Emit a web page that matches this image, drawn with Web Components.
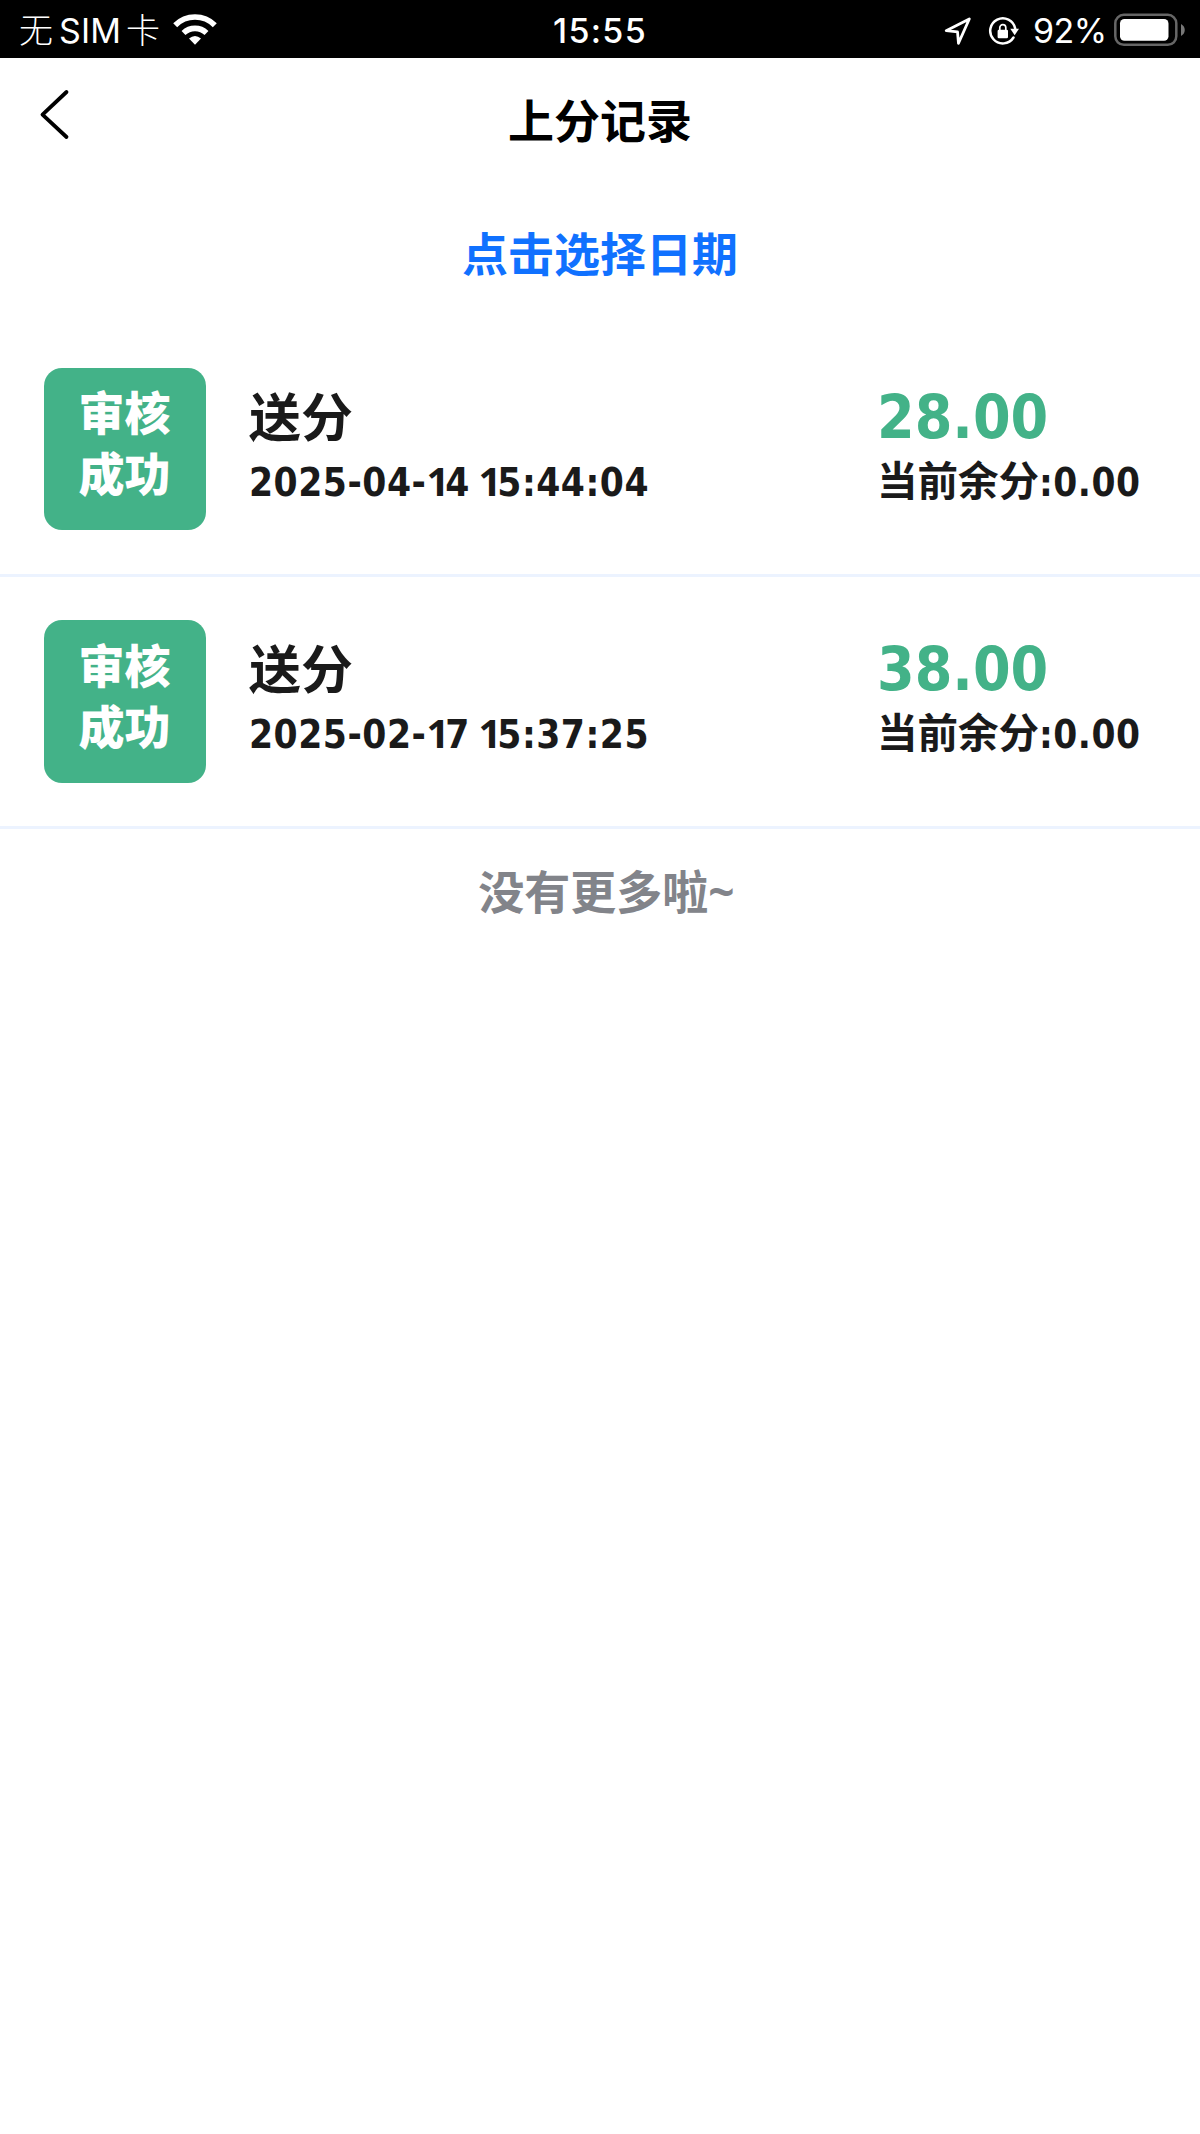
<!DOCTYPE html>
<html lang="zh-CN">
<head>
<meta charset="utf-8">
<title>上分记录</title>
<style>
html,body{margin:0;background:#fff}
body{width:1200px;height:2134px;overflow:hidden;font-family:"Noto Sans","Noto Sans CJK SC",sans-serif}
</style>
</head>
<body>
<records-page></records-page>
<script>
function define(name, html) {
  const t = document.createElement('template');
  t.innerHTML = html;
  customElements.define(name, class extends HTMLElement {
    constructor() {
      super();
      this.attachShadow({mode: 'open'}).append(t.content.cloneNode(true));
    }
  });
}

define('status-bar', `
<style>
:host{display:grid;grid-template-columns:1fr auto 1fr;align-items:center;height:58px;background:#000;color:#fff;font-family:Inter,"Noto Sans CJK SC",sans-serif;line-height:58px;white-space:nowrap}
.l,.r{display:flex;align-items:center;height:58px}
.l{padding-left:19px}
.r{justify-content:flex-end;padding-right:14px}
.carrier{font-size:33px;font-weight:300;width:141px;padding-top:1px}
.cjk{font-weight:300;font-size:34px}
.sim{font-size:34px;font-weight:400;letter-spacing:.1px;margin:0 5px 0 6px}
.time{font-size:34px;font-weight:500;letter-spacing:1.3px;padding-top:2px}
.pct{font-size:34px;letter-spacing:-.5px;width:76px;margin:2px 5px 0 13px}
svg{display:block;flex:none}
</style>
<div class="l"><span class="carrier"><span class="cjk">无</span><span class="sim">SIM</span><span class="cjk">卡</span></span>
<svg style="margin-left:12px;margin-bottom:2px" width="46" height="34" viewBox="0 0 46 34"><g fill="none" stroke="#fff" stroke-width="5.6"><path d="M3.2 13.2A28 28 0 0 1 42.8 13.2"/><path d="M11.5 21A16.5 16.5 0 0 1 34.500 21"/></g><path d="M17 26.500Q23 21.500 29 26.500L23 32.700Z" fill="#fff"/></svg></div>
<div class="time">15:55</div>
<div class="r">
<svg style="margin-top:1px" width="28" height="30" viewBox="0 0 28 30"><path d="M2.200 14.700L25.300 3 14.500 27.300 13.500 15.800Z" fill="none" stroke="#fff" stroke-width="2.800" stroke-linejoin="round"/></svg>
<svg style="margin:2px 0 0 16px" width="32" height="30" viewBox="0 0 32 30"><path d="M25.500 21.500A12.600 12.600 0 1 1 27.200 12.500" fill="none" stroke="#fff" stroke-width="2.500" stroke-linecap="round"/><path d="M22.300 12.800H31L26.700 19.300Z" fill="#fff"/><rect x="9.600" y="13.700" width="10.400" height="8.600" rx="1.300" fill="#fff"/><path d="M11.800 14.500V11.600a3 3 0 0 1 6 0V14.500" fill="none" stroke="#fff" stroke-width="1.700"/></svg>
<span class="pct">92%</span>
<svg style="margin-bottom:1px" width="72" height="34" viewBox="0 0 72 34"><rect x="1.300" y="1.800" width="61" height="30" rx="8.500" fill="none" stroke="#666" stroke-width="2.500"/><rect x="6" y="6" width="48.500" height="21.800" rx="4.500" fill="#fff"/><path d="M67 11C72 13.500 72 20.500 67 23Z" fill="#777"/></svg>
</div>`);

define('nav-bar', `
<style>
:host{display:grid;grid-template-columns:120px 1fr 120px;height:122px;color:#000}
svg{display:block;margin:30px 0 0 39px}
h1{margin:0;padding-top:32px;text-align:center;font-size:46px;font-weight:700;line-height:60px}
</style>
<svg width="32" height="54" viewBox="0 0 32 54"><path d="M27.500 4L3.500 26.700 27.500 49" fill="none" stroke="#000" stroke-width="3.800" stroke-linecap="round" stroke-linejoin="round"/></svg>
<h1><slot></slot></h1>`);

define('date-picker-link', `
<style>
:host{display:block;height:144.500px;text-align:center;color:#1071ff;font-size:46px;font-weight:700;line-height:60px;padding-top:43px;box-sizing:border-box}
</style><slot></slot>`);

define('status-badge', `
<style>
:host{display:block;box-sizing:border-box;width:162px;height:162.500px;border-radius:18px;background:#43b288;color:#fff;font-size:46px;font-weight:900;line-height:61px;text-align:center;padding:14.500px 35px 0 34px}
</style><slot></slot>`);

define('record-row', `
<style>
:host{display:flex;box-sizing:border-box;height:252.300px;padding:43.300px 0 0 44px;border-bottom:3px solid #ecf3ff;color:#1a1a1a;font-weight:700;white-space:nowrap}
.main{width:628px;margin-left:43px}
.title{font-size:52px;line-height:70px;padding-top:14px}
.time{font:700 38.500px/62px "DejaVu Sans Condensed","DejaVu Sans",sans-serif;font-stretch:condensed;word-spacing:-4px;letter-spacing:.5px}
.amount{font:700 60.200px/70px "DejaVu Sans Condensed","DejaVu Sans",sans-serif;font-stretch:condensed;padding-top:14px;color:#43b288}
.balance{font:700 40.500px/61px "DejaVu Sans Condensed","DejaVu Sans","Noto Sans CJK SC",sans-serif;font-stretch:condensed}
</style>
<status-badge><slot name="status"></slot></status-badge>
<div class="main"><div class="title"><slot name="title"></slot></div><div class="time"><slot name="time"></slot></div></div>
<div class="side"><div class="amount"><slot name="amount"></slot></div><div class="balance"><slot name="balance"></slot></div></div>`);

define('list-end', `
<style>
:host{display:block;text-align:center;padding:32px 0 0 13px;color:#82848a;font-size:46px;font-weight:700;line-height:60px}
</style><slot></slot>`);

define('records-page', `
<style>
:host{display:flex;flex-direction:column;width:1200px;height:2134px;background:#fff}
i{font:700 40px/1 "Noto Sans",sans-serif;letter-spacing:-4px}
b{font-size:38.400px;line-height:1;letter-spacing:.5px}
</style>
<status-bar></status-bar>
<nav-bar>上分记录</nav-bar>
<date-picker-link>点击选择日期</date-picker-link>
<record-row><span slot="status">审核<br>成功</span><span slot="title">送分</span><span slot="time">2025-04-<i>1</i>4 <i>1</i>5:44:04</span><span slot="amount">28.00</span><span slot="balance">当前余分<b>:0.00</b></span></record-row>
<record-row><span slot="status">审核<br>成功</span><span slot="title">送分</span><span slot="time">2025-02-<i>1</i>7 <i>1</i>5:37:25</span><span slot="amount">38.00</span><span slot="balance">当前余分<b>:0.00</b></span></record-row>
<list-end>没有更多啦~</list-end>`);
</script>
</body>
</html>
